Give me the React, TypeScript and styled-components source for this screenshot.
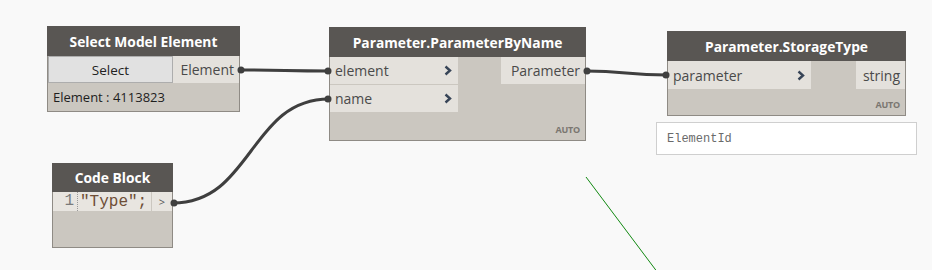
import React from "react";
import styled, { createGlobalStyle } from "styled-components";

const Global = createGlobalStyle`
  html, body { margin: 0; padding: 0; background: #f9f9f9; }
  * { box-sizing: border-box; }
`;

const Canvas = styled.div`
  position: relative;
  width: 932px;
  height: 270px;
  overflow: hidden;
  background: #f9f9f9;
  font-family: "Open Sans", "Noto Sans", sans-serif;
`;

const Wires = styled.svg`
  position: absolute;
  left: 0;
  top: 0;
  width: 932px;
  height: 270px;
  z-index: 2;
  pointer-events: none;
`;

const Node = styled.div<{ $x: number; $y: number; $w: number; $h: number }>`
  position: absolute;
  left: ${(p) => p.$x}px;
  top: ${(p) => p.$y}px;
  width: ${(p) => p.$w}px;
  height: ${(p) => p.$h}px;
  background: #cbc7c0;
  border: 1px solid #8f8b85;
  display: flex;
  flex-direction: column;
  z-index: 1;
`;

const Header = styled.div<{ $h?: number }>`
  height: ${(p) => p.$h ?? 30}px;
  margin: -1px -1px 0;
  background: #595653;
  color: #ffffff;
  font-weight: 700;
  font-size: 13.8px;
  display: flex;
  align-items: center;
  justify-content: center;
  flex-shrink: 0;
`;

const Body = styled.div`
  display: flex;
  justify-content: space-between;
  align-items: flex-start;
`;

const Inputs = styled.div<{ $w: number }>`
  width: ${(p) => p.$w}px;
  display: flex;
  flex-direction: column;
  gap: 1px;
`;

const InRow = styled.div<{ $h: number }>`
  height: ${(p) => p.$h}px;
  background: #e4e1dc;
  color: #4a4a4a;
  font-size: 14px;
  display: flex;
  align-items: center;
  justify-content: space-between;
  padding: 0 6px 0 5px;
`;

const OutPort = styled.div<{ $w: number; $h: number }>`
  width: ${(p) => p.$w}px;
  height: ${(p) => p.$h}px;
  background: #e4e1dc;
  color: #4a4a4a;
  font-size: 14px;
  display: flex;
  align-items: center;
  justify-content: flex-end;
  padding-right: 5px;
`;

const SelectButton = styled.div`
  width: 125px;
  height: 27px;
  background: #e1e1e1;
  border: 1px solid #adadad;
  color: #222;
  font-size: 13.5px;
  display: flex;
  align-items: center;
  justify-content: center;
`;

const Info = styled.div`
  font-size: 13px;
  color: #1e1e1e;
  padding: 5px 0 0 5px;
`;

const Footer = styled.div`
  margin-top: auto;
  display: flex;
  justify-content: flex-end;
  padding: 0 5px 4px 0;
  font-size: 9px;
  font-weight: 700;
  color: #7a7670;
  letter-spacing: -0.2px;
`;

const Chevron = () => (
  <svg width="8" height="11" viewBox="0 0 8 11">
    <path d="M1.5 1.5 L6 5.5 L1.5 9.5" fill="none" stroke="#374457" strokeWidth="2.4" />
  </svg>
);

const CodeRow = styled.div`
  height: 19px;
  display: flex;
`;

const CodeArea = styled.div`
  width: 98px;
  background: #e8e5e0;
  display: flex;
  align-items: center;
  font-family: "Liberation Mono", "DejaVu Sans Mono", monospace;
  font-size: 16px;
`;

const LineNo = styled.span`
  width: 25px;
  text-align: right;
  padding-right: 3px;
  color: #7a7a7a;
  border-right: 1px dotted #9a9a9a;
  height: 19px;
  line-height: 19px;
`;

const Code = styled.span`
  padding-left: 2px;
  color: #6e4e36;
`;

const CodeOut = styled.div`
  margin-left: 1px;
  flex: 1;
  background: #e8e5e0;
  color: #555;
  font-size: 11px;
  display: flex;
  align-items: center;
  justify-content: center;
`;

const Preview = styled.div`
  position: absolute;
  left: 656px;
  top: 122px;
  width: 261px;
  height: 33px;
  background: #ffffff;
  border: 1px solid #cfcfcf;
  font-family: "Liberation Mono", "DejaVu Sans Mono", monospace;
  font-size: 12px;
  color: #6a6a6a;
  display: flex;
  align-items: center;
  padding-left: 10px;
`;

export default function App() {
  return (
    <>
      <Global />
      <Canvas>
        <Node $x={47} $y={26} $w={193} $h={86}>
          <Header>Select Model Element</Header>
          <Body>
            <SelectButton>Select</SelectButton>
            <OutPort $w={66} $h={27}>Element</OutPort>
          </Body>
          <Info>Element : 4113823</Info>
        </Node>

        <Node $x={329} $y={27} $w={257} $h={114}>
          <Header>Parameter.ParameterByName</Header>
          <Body>
            <Inputs $w={128}>
              <InRow $h={27}>
                element <Chevron />
              </InRow>
              <InRow $h={27}>
                name <Chevron />
              </InRow>
            </Inputs>
            <OutPort $w={84} $h={27}>Parameter</OutPort>
          </Body>
          <Footer>AUTO</Footer>
        </Node>

        <Node $x={667} $y={31} $w={239} $h={85}>
          <Header>Parameter.StorageType</Header>
          <Body>
            <Inputs $w={143}>
              <InRow $h={28}>
                parameter <Chevron />
              </InRow>
            </Inputs>
            <OutPort $w={49} $h={28}>string</OutPort>
          </Body>
          <Footer>AUTO</Footer>
        </Node>

        <Preview>ElementId</Preview>

        <Node $x={52} $y={163} $w={121} $h={85}>
          <Header $h={29}>Code Block</Header>
          <CodeRow>
            <CodeArea>
              <LineNo>1</LineNo>
              <Code>"Type";</Code>
            </CodeArea>
            <CodeOut>&gt;</CodeOut>
          </CodeRow>
        </Node>

        <Wires viewBox="0 0 932 270">
          <g fill="none" stroke="#3f3f3f" strokeWidth="3" strokeLinecap="round">
            <path d="M240 70 C285 70 285 71 329 71" />
            <path d="M173 203 C252 203 250 99 329 99" />
            <path d="M586 71 C626 71 626 75 667 75" />
          </g>
          <g fill="#3f3f3f">
            <circle cx="241" cy="70" r="3.5" />
            <circle cx="328" cy="71" r="3.5" />
            <circle cx="328" cy="99" r="3.5" />
            <circle cx="174" cy="203" r="3.5" />
            <circle cx="587" cy="71" r="3.5" />
            <circle cx="666" cy="75" r="3.5" />
          </g>
          <line x1="586" y1="177" x2="658" y2="273" stroke="#118811" strokeWidth="1" />
        </Wires>
      </Canvas>
    </>
  );
}
